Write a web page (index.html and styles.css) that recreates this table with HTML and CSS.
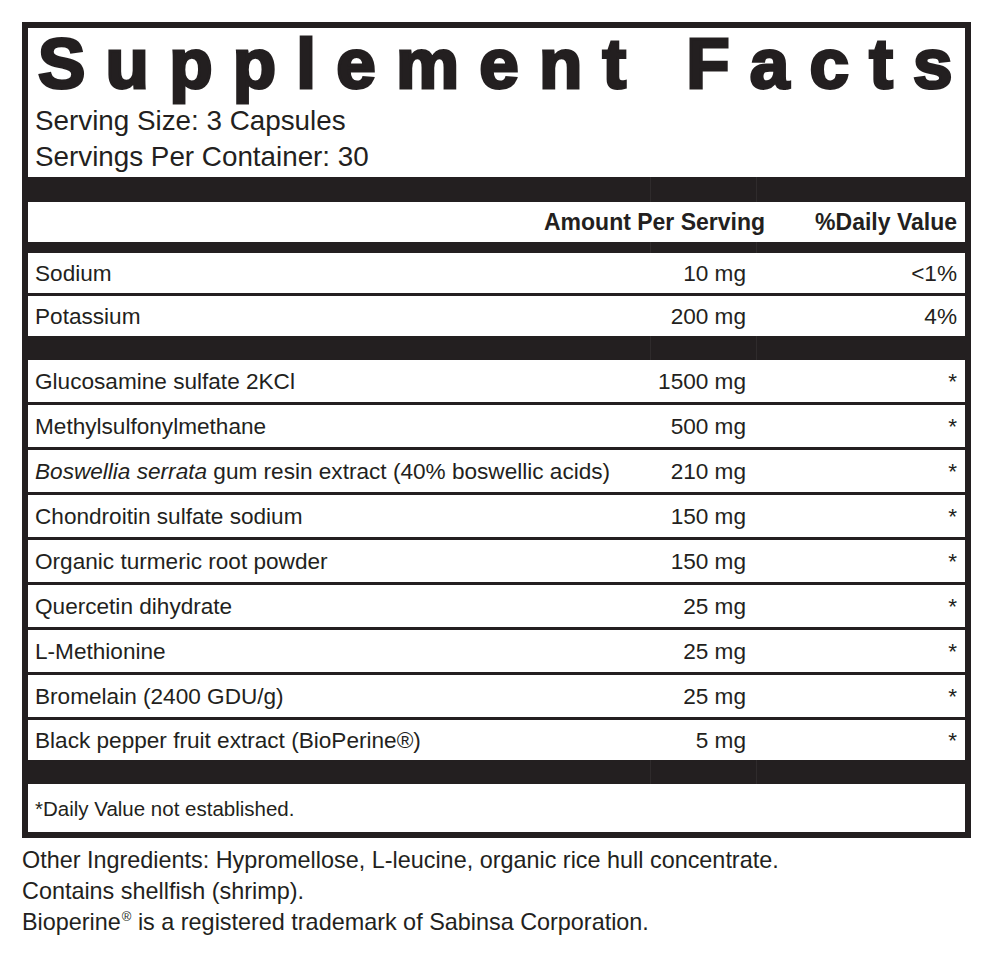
FILE: index.html
```html
<!DOCTYPE html>
<html lang="en">
<head>
  <meta charset="UTF-8">
  <meta name="viewport" content="width=device-width, initial-scale=1.0">
  <title>Supplement Facts</title>
  <link rel="stylesheet" href="styles.css">
</head>
<body>
  <div class="label">
    <div class="facts">
      <h1 class="title">Supplement Facts</h1>
      <p class="serving">Serving Size: 3 Capsules</p>
      <p class="serving">Servings Per Container: 30</p>
    </div>
    <div class="bar thick"><span></span><span></span><span></span></div>
    <div class="head">
      <span>Amount Per Serving</span>
      <span>%Daily Value</span>
    </div>
    <div class="bar thin"><span></span><span></span><span></span></div>
    <div class="section short">
      <div class="row"><span class="name">Sodium</span><span class="amt">10 mg</span><span class="dv">&lt;1%</span></div>
      <div class="row"><span class="name">Potassium</span><span class="amt">200 mg</span><span class="dv">4%</span></div>
    </div>
    <div class="bar thick"><span></span><span></span><span></span></div>
    <div class="section">
      <div class="row"><span class="name">Glucosamine sulfate 2KCl</span><span class="amt">1500 mg</span><span class="dv">*</span></div>
      <div class="row"><span class="name">Methylsulfonylmethane</span><span class="amt">500 mg</span><span class="dv">*</span></div>
      <div class="row"><span class="name"><i>Boswellia serrata</i> gum resin extract (40% boswellic acids)</span><span class="amt">210 mg</span><span class="dv">*</span></div>
      <div class="row"><span class="name">Chondroitin sulfate sodium</span><span class="amt">150 mg</span><span class="dv">*</span></div>
      <div class="row"><span class="name">Organic turmeric root powder</span><span class="amt">150 mg</span><span class="dv">*</span></div>
      <div class="row"><span class="name">Quercetin dihydrate</span><span class="amt">25 mg</span><span class="dv">*</span></div>
      <div class="row"><span class="name">L-Methionine</span><span class="amt">25 mg</span><span class="dv">*</span></div>
      <div class="row"><span class="name">Bromelain (2400 GDU/g)</span><span class="amt">25 mg</span><span class="dv">*</span></div>
      <div class="row last"><span class="name">Black pepper fruit extract (BioPerine®)</span><span class="amt">5 mg</span><span class="dv">*</span></div>
    </div>
    <div class="bar thick"><span></span><span></span><span></span></div>
    <div class="footnote">*Daily Value not established.</div>
  </div>
  <div class="notes">
    <p>Other Ingredients: Hypromellose, L-leucine, organic rice hull concentrate.</p>
    <p>Contains shellfish (shrimp).</p>
    <p>Bioperine<sup>®</sup> is a registered trademark of Sabinsa Corporation.</p>
  </div>
</body>
</html>
```

FILE: styles.css
```css
body {
  margin: 0;
  padding: 22px;
  font-family: "Liberation Sans", Arial, sans-serif;
  color: #231f20;
  background-color: white;
}
.label {
  width: 937px;
  border: 6px solid #231f20;
}
.facts {
  padding: 0 7px 2px;
}
.title {
  margin: 0;
  padding-left: 3px;
  font-size: 71px;
  font-weight: bold;
  line-height: 71px;
  letter-spacing: 20.2px;
  white-space: nowrap;
  -webkit-text-stroke: 3px #231f20;
}
.serving {
  margin: 0;
  font-size: 27.8px;
  line-height: 36px;
}
.facts .serving:first-of-type {
  margin-top: 4px;
}
.bar {
  display: flex;
  background-color: #231f20;
}
.bar span {
  flex: 0 0 auto;
}
.bar span:first-child {
  flex: 1;
}
.bar span:nth-child(2) {
  width: 105px;
  border-left: 1px solid #2f2b2c;
}
.bar span:nth-child(3) {
  width: 208px;
  border-left: 1px solid #2f2b2c;
}
.bar.thick {
  height: 24px;
}
.bar.thin {
  height: 11px;
}
.facts + .bar {
  height: 25px;
}
.head {
  display: flex;
  justify-content: flex-end;
  gap: 50px;
  height: 40px;
  padding: 0 8px;
  font-size: 23px;
  font-weight: bold;
  line-height: 41px;
}
.row {
  display: grid;
  grid-template-columns: 1fr auto 211px;
  align-items: center;
  height: 42px;
  padding: 1px 8px 0 7px;
  box-sizing: border-box;
  font-size: 22.6px;
  white-space: nowrap;
}
.row + .row {
  border-top: 3px solid #231f20;
  height: 45px;
}
.section.short .row {
  height: 40px;
}
.section.short .row + .row {
  height: 43px;
}
.row.last {
  height: 43px;
}
.amt {
  text-align: right;
}
.dv {
  text-align: right;
}
.footnote {
  height: 48px;
  padding: 0 7px;
  font-size: 20.5px;
  line-height: 50px;
}
.notes {
  margin-top: 7px;
  font-size: 23.4px;
  line-height: 31px;
}
.notes p {
  margin: 0;
}
.notes sup {
  font-size: 13px;
  line-height: 0;
  vertical-align: 9px;
  margin-left: 1px;
}
```
